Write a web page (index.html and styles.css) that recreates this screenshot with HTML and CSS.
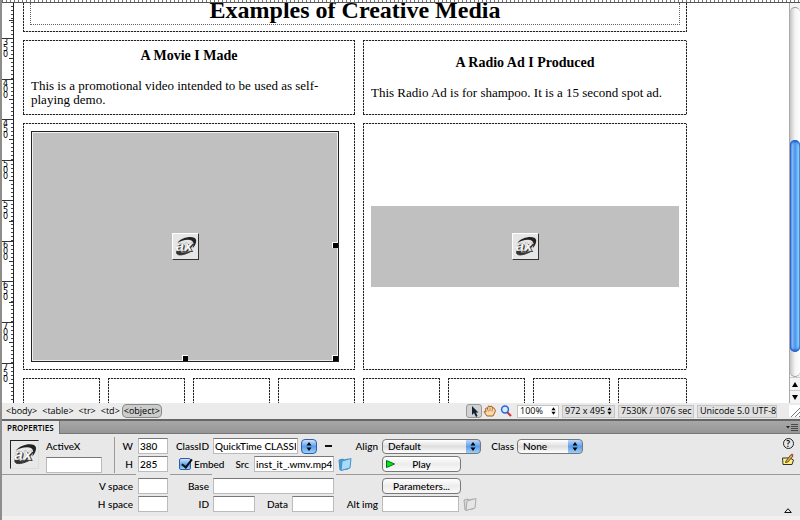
FILE: index.html
```html
<!DOCTYPE html>
<html lang="en">
<head>
  <meta charset="UTF-8" />
  <meta name="viewport" content="width=device-width, initial-scale=1.0"/>
  <title>Examples of Creative Media</title>
  <link rel="stylesheet" href="styles.css">
</head>
<body>
  <!-- Shared icons -->
  <svg class="defs" xmlns="http://www.w3.org/2000/svg">
    <symbol id="arrows" viewBox="0 0 6 9">
      <path d="M3 0 L5.5 3.5 H0.5 Z M3 9 L5.5 5.5 H0.5 Z"/>
    </symbol>
    <symbol id="activex" viewBox="0 0 28 28">
      <path d="M5 10 C10 3 25 1 26 7 C26 10 25 13 22 16 C24 10 23 7 17 6.500 C12 6.500 8 8 5 10 Z" fill="#222"/>
      <path d="M5 18 C1 24 9 26 21 19 C12 22 6 22 7 18 Z" fill="#333" stroke="#333"/>
      <text x="4.500" y="20.500" class="ax-shadow">ax</text>
      <text x="3" y="19.500" class="ax-face">ax</text>
    </symbol>
    <symbol id="folder" viewBox="0 0 14 14">
      <path d="M1 3 L5 2 L6 3 L10 2 V12 L2 13 Z" fill="var(--back)" stroke="var(--edge)"/>
      <path d="M4 4 L13 1.500 L12 11 L3 13.500 Z" fill="var(--front)" stroke="var(--edge)"/>
    </symbol>
  </svg>

  <div class="app">
    <div class="top-ruler"></div>

    <div class="workspace">
      <!-- Vertical ruler -->
      <ol class="ruler">
        <li class="ruler-start"></li>
        <li>350</li>
        <li>400</li>
        <li>450</li>
        <li>500</li>
        <li>550</li>
        <li>600</li>
        <li>650</li>
        <li>700</li>
        <li>750</li>
      </ol>

      <!-- Document being edited -->
      <main class="document">
        <div class="page">
          <div class="cell banner">
            <h1>Examples of Creative Media</h1>
          </div>
          <div class="cell left about">
            <h3>A Movie I Made</h3>
            <p>This is a promotional video intended to be used as self-playing demo.</p>
          </div>
          <div class="cell right about">
            <h3>A Radio Ad I Produced</h3>
            <p>This Radio Ad is for shampoo. It is a 15 second spot ad.</p>
          </div>
          <div class="cell left media">
            <div class="object movie">
              <svg class="ax-icon"><use href="#activex"/></svg>
              <i class="handle east"></i>
              <i class="handle south"></i>
              <i class="handle corner"></i>
            </div>
          </div>
          <div class="cell right media">
            <div class="object radio">
              <svg class="ax-icon"><use href="#activex"/></svg>
            </div>
          </div>
          <div class="cell small"></div>
          <div class="cell small"></div>
          <div class="cell small"></div>
          <div class="cell small"></div>
          <div class="cell small"></div>
          <div class="cell small"></div>
          <div class="cell small"></div>
          <div class="cell small"></div>
        </div>
      </main>

      <div class="scrollbar">
        <div class="track">
          <div class="before"></div>
          <div class="thumb"></div>
          <div class="after"></div>
        </div>
        <button class="scroll-btn" aria-label="Scroll up"><svg viewBox="0 0 6 5"><path d="M3 0 L6 5 H0 Z"/></svg></button>
        <button class="scroll-btn" aria-label="Scroll down"><svg viewBox="0 0 6 5"><path d="M0 0 H6 L3 5 Z"/></svg></button>
      </div>
    </div>

    <!-- Status bar -->
    <div class="status">
      <nav class="tags">
        <a href="#">&lt;body&gt;</a>
        <a href="#">&lt;table&gt;</a>
        <a href="#">&lt;tr&gt;</a>
        <a href="#">&lt;td&gt;</a>
        <a href="#" class="current">&lt;object&gt;</a>
      </nav>
      <div class="tools">
        <button class="tool active" aria-label="Select">
          <svg viewBox="0 0 14 12"><path d="M5 1 V10 L7 8 L9 12 L10.500 11 L9 7.500 H11.500 Z" fill="#123"/></svg>
        </button>
        <button class="tool" aria-label="Hand">
          <svg viewBox="0 0 14 12"><path d="M4 11 L1 7 Q1 5.500 3 7 L2.500 3.500 Q3 2 4.500 4 L5 1.500 Q6 0 7 2 L8 1 Q9.500 1 9.500 3 Q11 2 11.500 4 Q13 5 12 7 L10 11 Z" fill="#fbd9a8" stroke="#a5602a"/><path d="M4.500 4 L5.500 6.500 M7 2.500 V6 M9.500 3 L9 6.500" stroke="#a5602a" stroke-width=".7"/></svg>
        </button>
        <button class="tool" aria-label="Zoom">
          <svg viewBox="0 0 14 12"><path d="M8 7 L12 11" stroke="#d33" stroke-width="2.200"/><circle cx="6" cy="4.500" r="3.400" fill="#d8ecff" stroke="#2466d8" stroke-width="1.500"/></svg>
        </button>
      </div>
      <button class="zoom">100% <svg class="arrows"><use href="#arrows"/></svg></button>
      <button class="info size">972 x 495 <svg class="arrows"><use href="#arrows"/></svg></button>
      <span class="info weight">7530K / 1076 sec</span>
      <span class="info encoding">Unicode 5.0 UTF-8</span>
      <svg class="grip" viewBox="0 0 11 12"><path d="M2 12 L11 3 M6 12 L11 7 M10 12 L11 11" stroke="#777"/></svg>
    </div>

    <!-- Properties panel -->
    <div class="tabs">
      <h2 class="tab">PROPERTIES</h2>
      <button class="menu" aria-label="Panel menu">
        <svg viewBox="0 0 12 8"><path d="M0 3 H4 L2 5.500 Z" fill="#222"/><path d="M5 1.500 H12 M5 3.500 H12 M5 5.500 H12 M5 7.500 H12" stroke="#333" stroke-width=".8"/></svg>
      </button>
    </div>

    <form class="panel">
      <div class="identity">
        <svg class="ax-large"><use href="#activex"/></svg>
        <div class="name">
          <label for="name">ActiveX</label>
          <input id="name" type="text">
        </div>
      </div>

      <div class="group dims">
        <div class="row"><label for="w">W</label><input id="w" class="short" type="text" value="380"></div>
        <div class="row"><label for="h">H</label><input id="h" class="short" type="text" value="285"></div>
        <hr>
        <div class="row"><label for="vspace">V space</label><input id="vspace" class="short" type="text"></div>
        <div class="row"><label for="hspace">H space</label><input id="hspace" class="short" type="text"></div>
      </div>

      <div class="group source">
        <div class="row">
          <label class="lead" for="classid">ClassID</label>
          <input id="classid" class="classid" type="text" value="QuickTime CLASSID">
          <button type="button" class="stepper" aria-label="Choose ClassID"><svg class="arrows"><use href="#arrows"/></svg></button>
          <button type="button" class="minus" aria-label="Remove ClassID"></button>
        </div>
        <div class="row">
          <input id="embed" type="checkbox" checked>
          <label for="embed">Embed</label>
          <label class="src-label" for="src">Src</label>
          <input id="src" class="src" type="text" value="inst_it_.wmv.mp4">
          <button type="button" class="browse" aria-label="Browse for file"><svg><use href="#folder"/></svg></button>
        </div>
        <hr>
        <div class="row">
          <label class="lead" for="base">Base</label>
          <input id="base" class="base" type="text">
        </div>
        <div class="row">
          <label class="lead" for="ident">ID</label>
          <input id="ident" class="half" type="text">
          <label class="data-label" for="data">Data</label>
          <input id="data" class="half" type="text">
        </div>
      </div>

      <div class="group options">
        <div class="row">
          <label class="lead" for="align">Align</label>
          <span class="select align">
            <select id="align"><option>Default</option></select>
            <svg class="arrows"><use href="#arrows"/></svg>
          </span>
          <label class="class-label" for="class">Class</label>
          <span class="select class">
            <select id="class"><option>None</option></select>
            <svg class="arrows"><use href="#arrows"/></svg>
          </span>
        </div>
        <div class="row">
          <button type="button" class="push play"><svg viewBox="0 0 9 8"><path d="M.5 .5 L8.500 4 L.5 7.500 Z" fill="#0e0" stroke="#063"/></svg>Play</button>
        </div>
        <hr>
        <div class="row">
          <button type="button" class="push params">Parameters...</button>
        </div>
        <div class="row">
          <label class="lead" for="alt">Alt img</label>
          <input id="alt" class="alt" type="text" disabled>
          <button type="button" class="browse off" aria-label="Browse for image" disabled><svg><use href="#folder"/></svg></button>
        </div>
      </div>

      <div class="side">
        <button type="button" class="help">?</button>
        <button type="button" class="edit" aria-label="Quick tag editor">
          <svg viewBox="0 0 12 12"><path d="M.5 5 H8 L11.500 7 L10 11.500 H1 Z" fill="#fff27a" stroke="#333"/><path d="M4 8 L9 1.500 L11 3 L6 9 L3.500 9.500 Z" fill="#e8a94a" stroke="#222" stroke-width=".7"/><path d="M9 1.500 L10 .5 L11.500 1.800 L11 3 Z" fill="#d33"/></svg>
        </button>
        <button type="button" class="collapse" aria-label="Collapse">
          <svg viewBox="0 0 8 5"><path d="M4 .7 L7.300 4.500 H.7 Z" fill="none" stroke="#111"/></svg>
        </button>
      </div>
    </form>
  </div>
</body>
</html>
```
FILE: styles.css
```css
:root {
  --bg: #e8e8e8;
  --line: #9a9a9a;
  --silver: #c0c0c0;
  --dash: #222;
}

* {
  box-sizing: border-box;
}

body {
  margin: 0;
  background-color: #f0f0f0;
  font-family: Lato, sans-serif;
  font-size: 10px;
  font-weight: 500;
  line-height: 14px;
  color: #000;
}

button,
input,
select {
  margin: 0;
  padding: 0;
  border: none;
  border-radius: 0;
  background: none;
  font: inherit;
  color: inherit;
}

svg {
  display: block;
  flex: none;
}

.defs {
  position: absolute;
  width: 0;
  height: 0;
  overflow: visible;
}

.arrows {
  width: 6px;
  height: 9px;
}

.app {
  display: flex;
  flex-direction: column;
  height: 100vh;
  padding-bottom: 4px;
  border-left: 2px solid #8f8d8a;
}

.top-ruler {
  flex: none;
  height: 3px;
  border-bottom: 1px solid #555;
  background: repeating-linear-gradient(90deg, #777 0 1px, #fff 1px 4px);
}

.workspace {
  display: flex;
  flex: 1;
  min-height: 0;
  background-color: #fff;
}

/* Ruler */
.ruler {
  display: flex;
  flex-direction: column;
  width: 12px;
  margin: 0;
  padding: 0;
  border-right: 1px solid #222;
  list-style: none;
}

.ruler li {
  flex: 1;
  min-height: 0;
  width: 11px;
  padding: 1px 4px 0 0;
  overflow: hidden;
  border-top: 1px solid #333;
  background:
    linear-gradient(#333, #333) right 50% / 4px 1px no-repeat,
    repeating-linear-gradient(#fff 0 3px, #444 3px 4px) right top / 2px 100% no-repeat;
  font-family: 'DejaVu Sans', sans-serif;
  font-size: 8px;
  line-height: 6px;
  text-align: center;
  word-break: break-all;
}

.ruler .ruler-start {
  flex: none;
  height: 35px;
  border: none;
}

/* Document */
.document {
  flex: 1;
  min-width: 0;
  padding-left: 9px;
  overflow: hidden;
  font-family: 'Liberation Serif', serif;
  font-weight: 400;
}

.page {
  display: grid;
  grid-template-columns: repeat(7, 77px) 69px;
  grid-template-rows: 29px 75px 247px 60px;
  gap: 8px;
}

.cell {
  padding: 7px;
  background:
    repeating-linear-gradient(90deg, var(--dash) 0 2px, #ccc 2px 3px) top / 100% 1px no-repeat,
    repeating-linear-gradient(90deg, var(--dash) 0 2px, #ccc 2px 3px) bottom / 100% 1px no-repeat,
    repeating-linear-gradient(var(--dash) 0 2px, #ccc 2px 3px) left / 1px 100% no-repeat,
    repeating-linear-gradient(var(--dash) 0 2px, #ccc 2px 3px) right / 1px 100% no-repeat;
}

.banner {
  grid-column: span 8;
  padding-top: 0;
  background-size: 0 0, 100% 1px, 1px 100%, 1px 100%;
}

.banner h1 {
  height: 22px;
  margin: 0;
  border: 1px dotted #666;
  border-top: none;
  font-size: 24px;
  line-height: 14px;
  text-align: center;
}

.left {
  grid-column: span 4;
}

.right {
  grid-column: span 4;
}

.about,
.media {
  display: flex;
  flex-direction: column;
  justify-content: center;
  padding: 0 8px;
}

.about h3 {
  margin: 0 0 16px;
  font-size: 14px;
  line-height: 14px;
  text-align: center;
}

.about p {
  margin: 0;
  font-size: 13px;
}

.object {
  display: flex;
  align-items: center;
  justify-content: center;
  position: relative;
  width: 308px;
  background-color: var(--silver);
}

.movie {
  height: 231px;
  border: 1px solid #222;
  box-shadow: inset 0 0 0 1px #eee;
}

.radio {
  height: 81px;
}

.ax-icon {
  width: 27px;
  height: 27px;
  border: 1px solid #fff;
  border-right-color: #333;
  border-bottom-color: #333;
  background-color: #e6e6e6;
}

.ax-shadow,
.ax-face {
  font: italic bold 17px 'Liberation Sans', sans-serif;
  fill: #333;
}

.ax-face {
  fill: #fff;
  stroke: #888;
  stroke-width: 0.3px;
}

.handle {
  position: absolute;
  width: 6px;
  height: 6px;
  border: 1px solid #fff;
  border-right: none;
  border-bottom: none;
  background-color: #000;
}

.east {
  right: 0;
  top: 48%;
}

.south {
  left: 49%;
  bottom: 0;
}

.corner {
  right: 0;
  bottom: 0;
}

/* Scrollbar */
.scrollbar {
  display: flex;
  flex-direction: column;
  width: 11px;
  border-left: 1px solid #aaa;
  background-color: #f4f4f4;
}

.track {
  display: flex;
  flex: 1;
  flex-direction: column;
  margin-top: 4px;
  border: 1px solid #999;
  border-width: 1px 0;
  border-radius: 6px;
  background: linear-gradient(90deg, #c4c4c4, #f4f4f4 50%, #fff);
}

.before {
  flex: 132;
}

.thumb {
  flex: 213;
  border-radius: 5px;
  background: linear-gradient(90deg, #1c54c4 0, #8fbcf2 20%, #4a94ec 50%, #62b0f8 70%, #a4e0ff 90%, #3d78c0);
  box-shadow: inset 0 2px 2px #1f5fd0, inset 0 -2px 2px #1f5fd0;
}

.after {
  flex: 24;
}

.scroll-btn {
  display: flex;
  align-items: center;
  justify-content: center;
  height: 13px;
  border-top: 1px solid #ccc;
}

.scroll-btn svg {
  width: 6px;
  height: 5px;
}

/* Status bar */
.status {
  display: flex;
  flex: none;
  align-items: center;
  height: 16px;
  background-color: #ebebeb;
  font-family: 'Open Sans', sans-serif;
  font-size: 9px;
}

.tags {
  display: flex;
  gap: 5px;
  flex: 1;
  padding-left: 4px;
}

.tags a {
  color: #000;
  text-decoration: none;
}

.tags .current {
  margin-left: -3px;
  padding: 0 2px;
  border-radius: 5px;
  background-color: #ccc;
  box-shadow: inset 0 0 0 1px #888;
  line-height: 13px;
}

.tools {
  display: flex;
  margin-right: 3px;
}

.tool {
  display: flex;
  align-items: center;
  justify-content: center;
  width: 16px;
  height: 14px;
}

.tool svg {
  width: 14px;
  height: 12px;
}

.active {
  border: 1px solid #999;
  border-radius: 3px;
  background-color: #d2d2d2;
}

.zoom,
.info {
  display: flex;
  align-items: center;
  justify-content: space-between;
  height: 13px;
  margin-right: 3px;
  padding: 0 2px;
  border: 1px solid #c4c4c4;
  background-color: #e0e0e0;
  white-space: nowrap;
}

.zoom {
  width: 42px;
  background-color: #fff;
}

.size {
  width: 53px;
}

.weight {
  width: 76px;
}

.encoding {
  width: 80px;
}

.zoom .arrows,
.size .arrows {
  width: 5px;
  height: 8px;
}

.grip {
  width: 11px;
  height: 12px;
  margin-left: 9px;
  background-color: #fff;
}

/* Properties panel */
.tabs {
  display: flex;
  flex: none;
  justify-content: space-between;
  height: 15px;
  border-top: 2px solid #666;
  border-bottom: 1px solid #777;
  background: linear-gradient(#a8a8a8, #969696);
}

.tab {
  height: 13px;
  margin: 0;
  padding: 0 5px;
  border-right: 1px solid #777;
  background-color: var(--bg);
  font-family: 'Open Sans', sans-serif;
  font-size: 8px;
  font-weight: 600;
  line-height: 13px;
}

.menu {
  padding-right: 2px;
}

.menu svg {
  width: 12px;
  height: 8px;
}

.panel {
  display: flex;
  flex: none;
  height: 82px;
  padding-top: 3px;
  background-color: var(--bg);
}

.group {
  flex: none;
}

.row {
  display: flex;
  align-items: center;
  height: 18px;
}

.panel hr {
  height: 1px;
  margin: 1px 0 2px;
  border: none;
  background-color: var(--line);
}

.panel input[type="text"] {
  height: 16px;
  padding: 0 1px;
  border: 1px solid #bbb;
  border-top-color: #777;
  background-color: #fff;
}

.identity {
  display: flex;
  gap: 7px;
  width: 112px;
  height: 38px;
  padding: 3px 0 0 8px;
  border-bottom: 1px solid var(--line);
}

.ax-large {
  width: 29px;
  height: 29px;
  border: 1px solid #ddd;
  border-top-color: #222;
  border-left-color: #222;
}

.name label {
  display: block;
  margin-top: -1px;
}

.name input {
  display: block;
  width: 56px;
  margin-top: 4px;
}

.dims {
  width: 54px;
}

.dims .row {
  justify-content: flex-end;
  gap: 5px;
}

.dims label {
  flex: none;
}

.dims .row:first-child,
.dims .row:nth-child(2) {
  border-left: 1px solid var(--line);
}

.dims hr {
  margin-right: 32px;
}

.panel .short {
  width: 30px;
}

.source {
  width: 186px;
  padding-left: 2px;
}

.source hr {
  width: 42px;
}

.lead {
  flex: none;
  width: 39px;
  margin-right: 4px;
  text-align: right;
}

.panel .classid {
  width: 85px;
}

.stepper {
  display: flex;
  align-items: center;
  justify-content: center;
  width: 16px;
  height: 15px;
  margin-left: 3px;
  border: 1px solid #2b5fae;
  border-radius: 4px;
  background: linear-gradient(#cfe3fb, #5c9eea 50%, #9cd0fb);
}

.minus {
  width: 7px;
  height: 2px;
  margin-left: 8px;
  background-color: #111;
}

.source input[type="checkbox"] {
  flex: none;
  position: relative;
  width: 12px;
  height: 12px;
  margin: 0 3px 0 9px;
  border: 1px solid #2b5fae;
  border-radius: 2px;
  background: linear-gradient(#cfe3fb, #5c9eea 60%, #9cd0fb);
  appearance: none;
}

/* Tick mark */
.source input[type="checkbox"]::after {
  content: "";
  position: absolute;
  left: 4px;
  top: -2px;
  width: 4px;
  height: 9px;
  border: solid #111;
  border-width: 0 2px 2px 0;
  transform: rotate(38deg);
}

.src-label {
  flex: 1;
  margin-right: 5px;
  text-align: right;
}

.panel .src {
  flex: none;
  width: 80px;
}

.browse {
  margin-left: 4px;
  --back: #3f9fd8;
  --front: #a5dcfa;
  --edge: #4a8fc0;
}

.source .row {
  width: 182px;
}

.browse svg {
  width: 14px;
  height: 14px;
}

.off {
  --back: #d8d8d8;
  --front: #e6e6e6;
  --edge: #aaa;
}

.panel .base {
  width: 121px;
}

.panel .half {
  width: 42px;
}

.data-label {
  width: 33px;
  margin-right: 4px;
  text-align: right;
}

.options {
  flex: 1;
  margin-left: -18px;
}

.options .lead {
  width: 42px;
}

.select {
  display: flex;
  position: relative;
}

.select select {
  width: 100%;
  height: 15px;
  padding-left: 5px;
  border: 1px solid #777;
  border-radius: 4px;
  background:
    linear-gradient(#bcd8fa, #5c9eea 50%, #9cd0fb) right / 14px 100% no-repeat,
    linear-gradient(#fff, #dedede 50%, #fff);
  line-height: 13px;
  appearance: none;
}

.select .arrows {
  position: absolute;
  right: 5px;
  top: 3px;
}

.align {
  width: 99px;
}

.class {
  width: 66px;
}

.class-label {
  width: 33px;
  margin-right: 3px;
  text-align: right;
}

.push {
  display: flex;
  align-items: center;
  justify-content: center;
  position: relative;
  width: 79px;
  height: 16px;
  margin-left: 46px;
  border: 1px solid #777;
  border-radius: 4px;
  background: linear-gradient(#fff, #ececec 50%, #fafafa);
}

.play svg {
  position: absolute;
  left: 3px;
  width: 9px;
  height: 8px;
}

.panel .alt {
  width: 77px;
  border-color: #ddd;
}

.side {
  display: flex;
  flex-direction: column;
  align-items: center;
  width: 12px;
  margin: 1px 6px 3px -18px;
}

.help {
  width: 11px;
  height: 11px;
  border: 1px solid #222;
  border-radius: 50%;
  font-size: 9px;
  font-weight: 700;
  line-height: 9px;
}

.edit {
  margin-top: 4px;
}

.edit svg {
  width: 12px;
  height: 12px;
}

.collapse {
  margin-top: auto;
}

.collapse svg {
  width: 8px;
  height: 5px;
}
```
